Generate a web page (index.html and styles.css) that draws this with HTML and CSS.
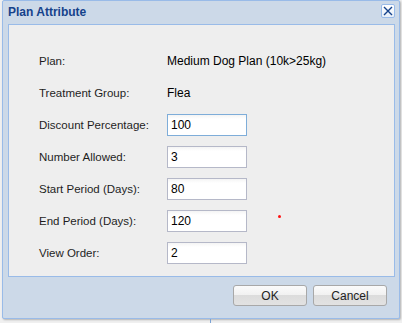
FILE: index.html
```html
<!DOCTYPE html>
<html lang="en">
<head>
    <meta charset="UTF-8">
    <title>Plan Attribute</title>
    <link rel="stylesheet" href="styles.css">
</head>
<body>
    <div class="window">
        <div class="window-header">
            <span class="window-title">Plan Attribute</span>
            <button class="close-button" aria-label="Close">
                <svg width="10" height="10" viewBox="0 0 10 10">
                    <path d="M1 1 L9 9 M9 1 L1 9" stroke="#15428b" stroke-width="1.4" fill="none"/>
                </svg>
            </button>
        </div>

        <div class="window-body">
            <div class="form-row">
                <span class="form-label">Plan:</span>
                <span class="form-value">Medium Dog Plan (10k&gt;25kg)</span>
            </div>
            <div class="form-row">
                <span class="form-label">Treatment Group:</span>
                <span class="form-value">Flea</span>
            </div>
            <div class="form-row">
                <label class="form-label" for="discount">Discount Percentage:</label>
                <input class="form-input focused" type="text" id="discount" value="100">
            </div>
            <div class="form-row">
                <label class="form-label" for="allowed">Number Allowed:</label>
                <input class="form-input" type="text" id="allowed" value="3">
            </div>
            <div class="form-row">
                <label class="form-label" for="start">Start Period (Days):</label>
                <input class="form-input" type="text" id="start" value="80">
            </div>
            <div class="form-row">
                <label class="form-label" for="end">End Period (Days):</label>
                <input class="form-input" type="text" id="end" value="120">
                <span class="marker"></span>
            </div>
            <div class="form-row">
                <label class="form-label" for="order">View Order:</label>
                <input class="form-input" type="text" id="order" value="2">
            </div>
        </div>

        <div class="window-footer">
            <button class="btn">OK</button>
            <button class="btn">Cancel</button>
        </div>
    </div>
    <div class="behind-line"></div>
</body>
</html>
```

FILE: styles.css
```css
/* Page */
body {
    margin: 0;
    background-color: #f0f0f0;
    font-family: 'Liberation Sans', Arial, sans-serif;
    font-size: 12px;
    color: #000;
}

/* Window frame */
.window {
    margin-left: 2px;
    width: 398px;
    height: 319px;
    box-sizing: border-box;
    border: 1px solid #99bbe8;
    border-radius: 2px;
    background-color: #ccd9e8;
    display: flex;
    flex-direction: column;
    box-shadow: 1px 1px 2px rgba(0, 0, 0, 0.25);
}

.window-header {
    height: 23px;
    display: flex;
    align-items: center;
    justify-content: space-between;
    padding: 0 4px 0 5px;
}

.window-title {
    font-weight: bold;
    color: #15428b;
    font-size: 12px;
    margin-top: -1px;
}

.close-button {
    width: 14px;
    height: 14px;
    padding: 0;
    border: 1px solid #99bbe8;
    border-radius: 2px;
    background: linear-gradient(#ffffff, #e6eef8);
    display: flex;
    align-items: center;
    justify-content: center;
    margin-top: -4px;
}

/* Body panel */
.window-body {
    margin: 0 4px 0 5px;
    height: 253px;
    box-sizing: border-box;
    border: 1px solid #99bbe8;
    background-color: #eeeeee;
    padding: 25px 0 0 30px;
    display: flex;
    flex-direction: column;
    gap: 10px;
}

.form-row {
    height: 22px;
    display: flex;
    align-items: center;
}

.form-label {
    width: 128px;
    font-size: 11.5px;
    color: #1e1e1e;
}

.form-value {
    color: #000;
}

.form-input {
    width: 80px;
    height: 22px;
    box-sizing: border-box;
    border: 1px solid #b5b8c8;
    background: linear-gradient(#f4f4f4, #ffffff 4px);
    padding: 0 3px;
    font-family: 'Liberation Sans', Arial, sans-serif;
    font-size: 12px;
    color: #000;
    outline: none;
}

.form-input.focused {
    border-color: #7eadd9;
}

.marker {
    width: 3px;
    height: 3px;
    border-radius: 50%;
    background-color: #ff1010;
    margin-left: 31px;
    align-self: flex-start;
    margin-top: 5px;
}

/* Footer buttons */
.window-footer {
    display: flex;
    justify-content: flex-end;
    gap: 6px;
    padding: 8px 12px 0 0;
}

.btn {
    width: 74px;
    height: 21px;
    border: 1px solid #a8a8a8;
    border-radius: 3px;
    background: linear-gradient(#fbfbfb 0%, #f0f0f0 50%, #dcdcdc 50%, #e2e2e2 100%);
    font-family: 'Liberation Sans', Arial, sans-serif;
    font-size: 12px;
    color: #222;
    padding: 0;
}

.behind-line {
    margin-left: 210px;
    width: 1px;
    height: 4px;
    background-color: #7ba3d6;
}
```
